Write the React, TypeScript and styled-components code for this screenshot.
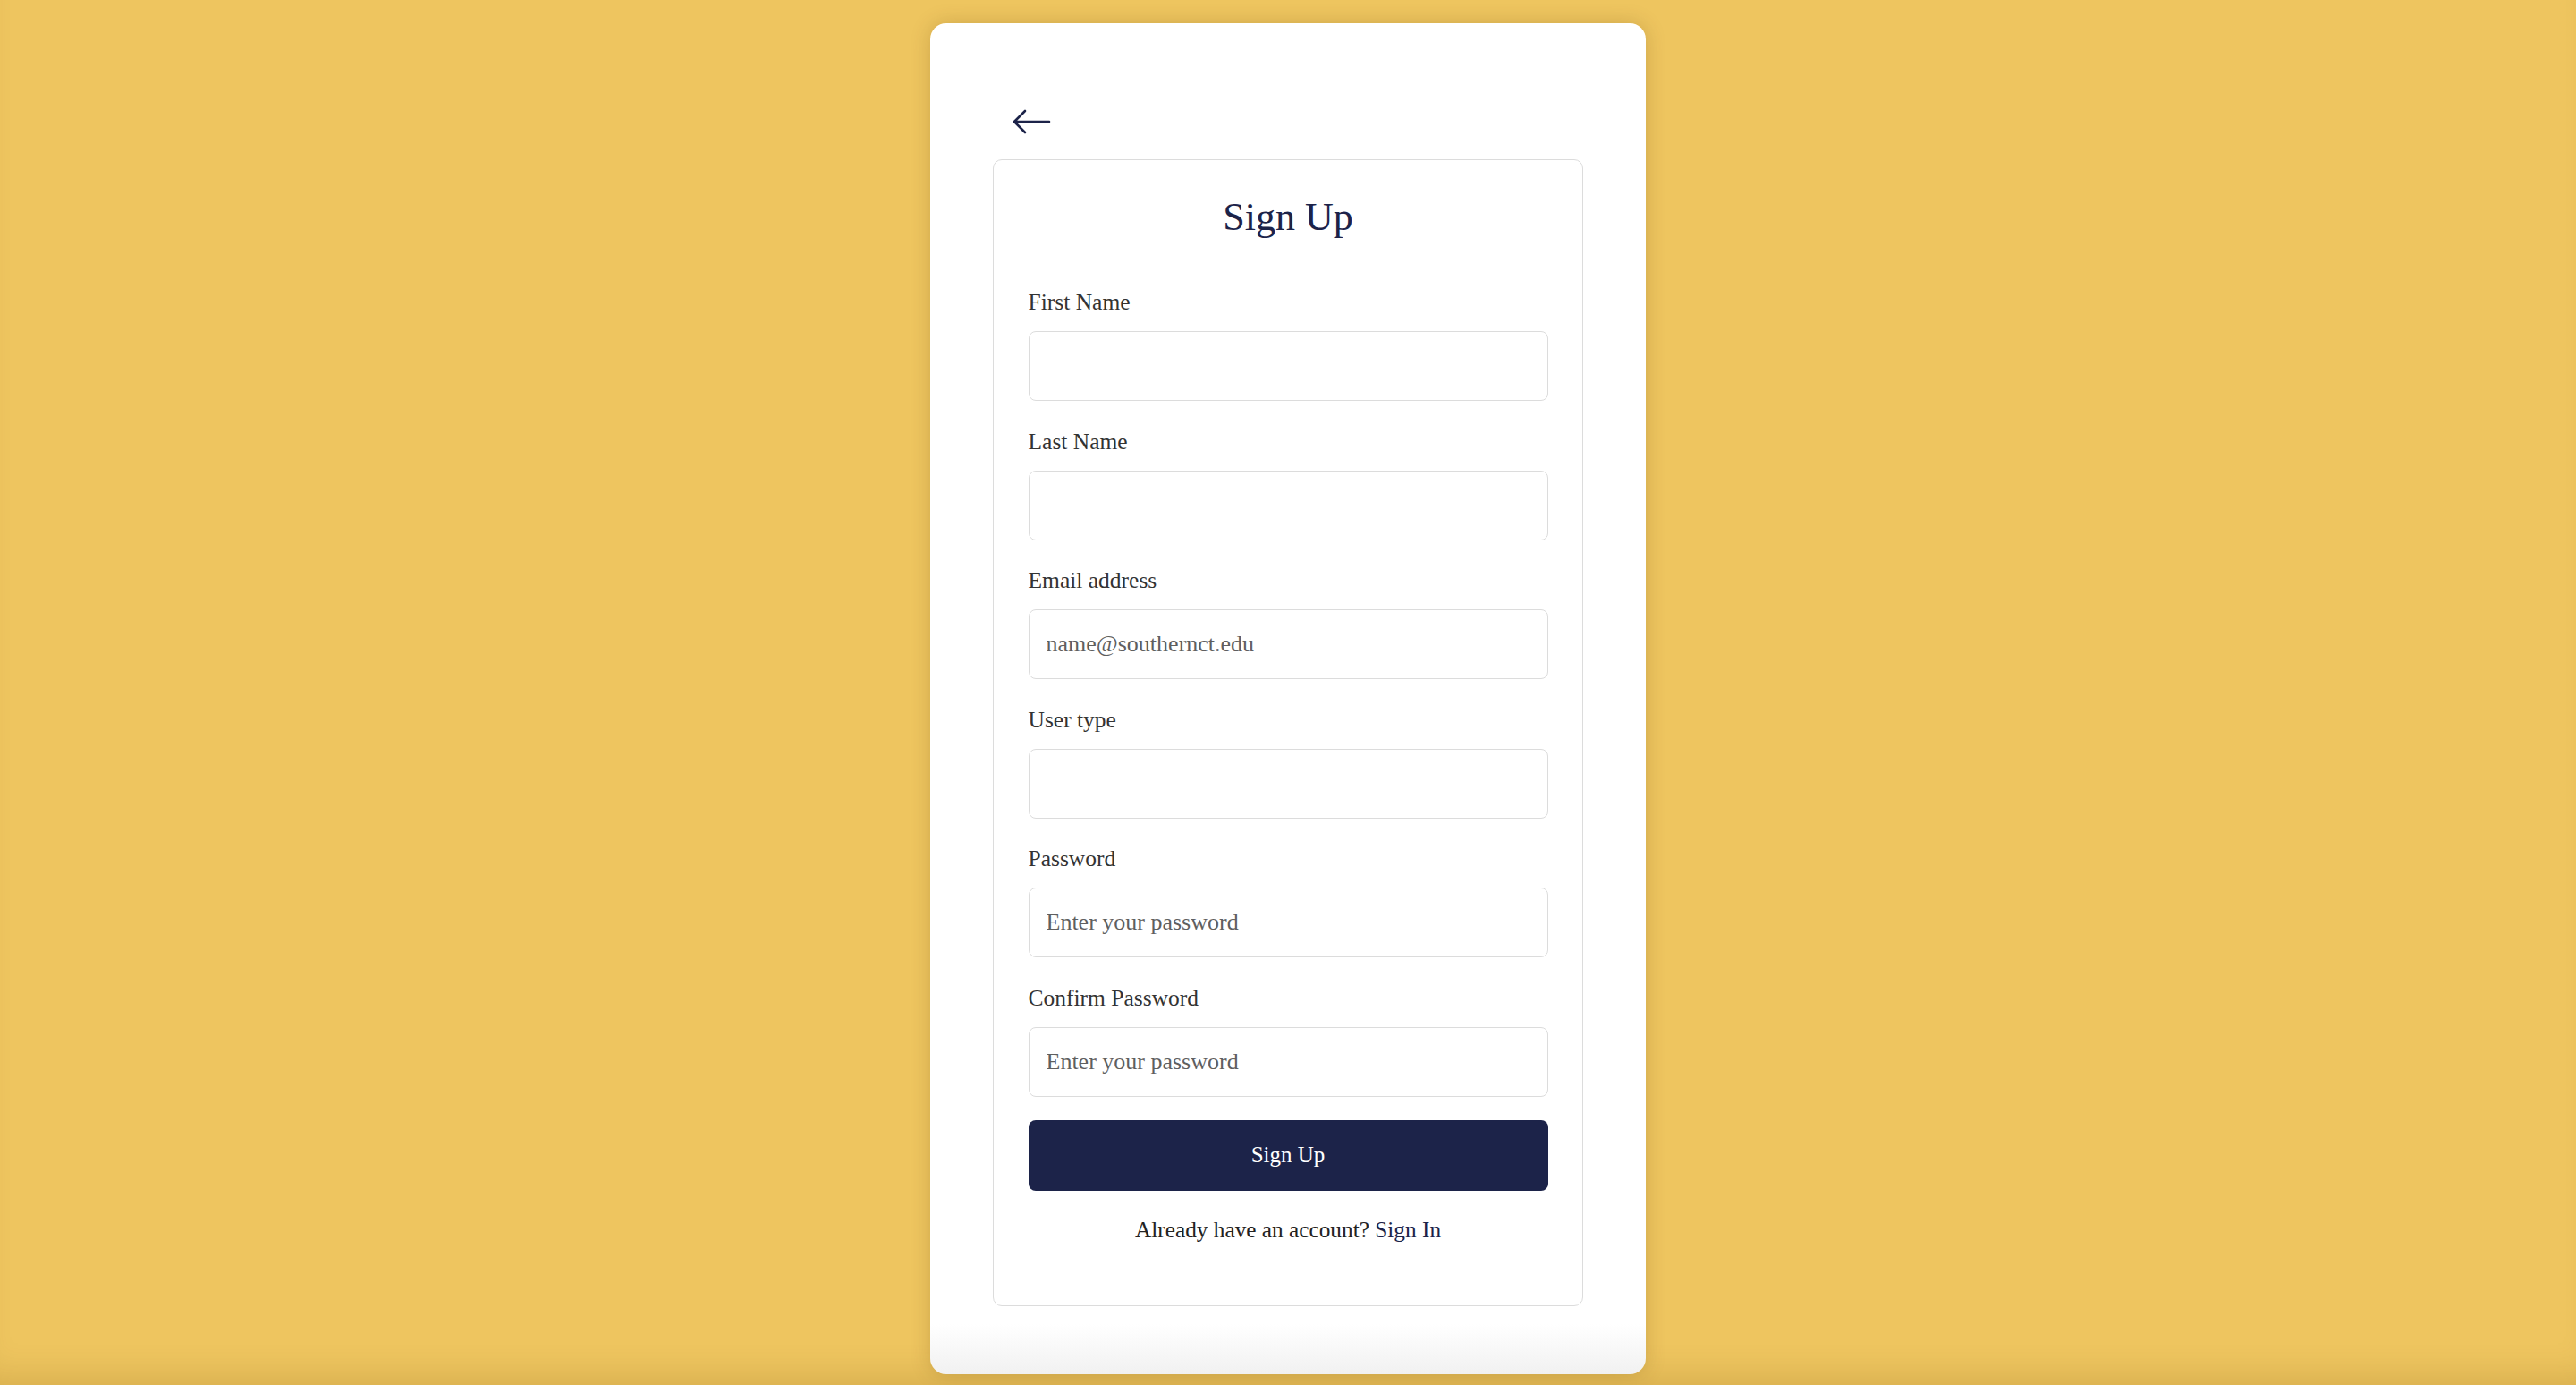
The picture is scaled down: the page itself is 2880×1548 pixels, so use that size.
import { createGlobalStyle, styled } from 'styled-components';

const NAVY = '#1c2349';

const GlobalStyle = createGlobalStyle`
  html, body {
    margin: 0;
    padding: 0;
    background: #eec55f;
  }
  * {
    box-sizing: border-box;
  }
  body {
    font-family: 'Liberation Serif', 'Times New Roman', serif;
  }
`;

const Page = styled.div`
  min-height: 100vh;
  display: flex;
  justify-content: center;
  padding-top: 26px;
  background: #eec55f;
  box-shadow: inset 0 -34px 36px -24px rgba(110, 70, 0, 0.18);
`;

const Card = styled.div`
  width: 800px;
  height: 1510px;
  padding: 96px 70px 0;
  border-radius: 18px;
  background: linear-gradient(to bottom, #ffffff calc(100% - 56px), #f1f1f1);
  box-shadow: 0 0 22px rgba(90, 60, 0, 0.22);
  display: flex;
  flex-direction: column;
`;

const BackButton = styled.button`
  align-self: flex-start;
  margin-left: 21px;
  margin-bottom: 29px;
  padding: 0;
  border: none;
  background: none;
  height: 27px;
  cursor: pointer;
  display: flex;
  align-items: center;
`;

const FormBox = styled.div`
  border: 1.5px solid #dcdcdc;
  border-radius: 10px;
  padding: 38px 38.5px 69px;
  display: flex;
  flex-direction: column;
`;

const Title = styled.h1`
  margin: 0 0 53px;
  font-size: 44px;
  line-height: 52px;
  font-weight: 400;
  text-align: center;
  color: ${NAVY};
`;

const Field = styled.div`
  display: flex;
  flex-direction: column;
  gap: 16px;
  margin-bottom: 29.6px;
`;

const Label = styled.label`
  font-size: 25.5px;
  line-height: 32px;
  color: #333333;
`;

const Input = styled.input`
  height: 78px;
  width: 100%;
  padding: 0 19px;
  border: 1.5px solid #dcdcdc;
  border-radius: 8px;
  background: #fff;
  font-family: inherit;
  font-size: 26px;
  color: #222;
  outline: none;
  &::placeholder {
    color: #5f5f5f;
  }
`;

const SubmitButton = styled.button`
  margin-top: -3.6px;
  height: 79px;
  width: 100%;
  border: none;
  border-radius: 8px;
  background: ${NAVY};
  color: #ffffff;
  font-family: inherit;
  font-size: 25px;
  cursor: pointer;
`;

const Footer = styled.p`
  margin: 27px 0 0;
  font-size: 25.3px;
  line-height: 32px;
  text-align: center;
  color: #222222;
`;

const FooterLink = styled.a`
  color: ${NAVY};
  text-decoration: none;
`;

const fields = [
  { id: 'first', label: 'First Name', type: 'text', placeholder: '' },
  { id: 'last', label: 'Last Name', type: 'text', placeholder: '' },
  { id: 'email', label: 'Email address', type: 'email', placeholder: 'name@southernct.edu' },
  { id: 'usertype', label: 'User type', type: 'text', placeholder: '' },
  { id: 'password', label: 'Password', type: 'password', placeholder: 'Enter your password' },
  { id: 'confirm', label: 'Confirm Password', type: 'password', placeholder: 'Enter your password' }
];

export default function App() {
  return (
    <>
      <GlobalStyle />
      <Page>
        <Card>
          <BackButton aria-label="Back">
            <svg width="44" height="28" viewBox="0 0 44 28" fill="none">
              <path
                d="M42 14H3M15 2L3 14l12 12"
                stroke={NAVY}
                strokeWidth="2.6"
                strokeLinecap="round"
                strokeLinejoin="round"
              />
            </svg>
          </BackButton>
          <FormBox>
            <Title>Sign Up</Title>
            {fields.map((f) => (
              <Field key={f.id}>
                <Label htmlFor={f.id}>{f.label}</Label>
                <Input id={f.id} type={f.type} placeholder={f.placeholder} />
              </Field>
            ))}
            <SubmitButton>Sign Up</SubmitButton>
            <Footer>
              Already have an account? <FooterLink href="#">Sign In</FooterLink>
            </Footer>
          </FormBox>
        </Card>
      </Page>
    </>
  );
}
